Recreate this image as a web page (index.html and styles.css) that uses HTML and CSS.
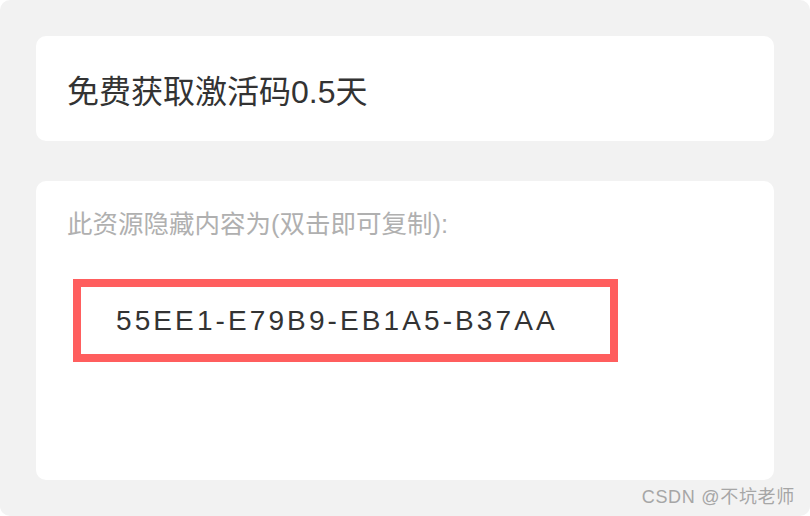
FILE: index.html
```html
<!DOCTYPE html>
<html lang="zh-CN">
<head>
    <meta charset="UTF-8">
    <meta name="viewport" content="width=device-width, initial-scale=1.0">
    <title>免费获取激活码</title>
    <link rel="stylesheet" href="styles.css">
</head>
<body>
    <div class="page">
        <div class="card card-title">
            <h1>免费获取激活码0.5天</h1>
        </div>

        <div class="card card-hidden">
            <p class="hint">此资源隐藏内容为(双击即可复制):</p>
            <div class="code-box">
                <span class="code">55EE1-E79B9-EB1A5-B37AA</span>
            </div>
        </div>

        <div class="watermark">CSDN @不坑老师</div>
    </div>
</body>
</html>
```

FILE: styles.css
```css
html, body {
    margin: 0;
    padding: 0;
    background: #fff;
}
body {
    font-family: "Liberation Sans", "Noto Sans CJK SC", sans-serif;
    color: #333;
}
.page {
    position: relative;
    box-sizing: border-box;
    width: 810px;
    height: 516px;
    padding: 36px;
    background: #f2f2f2;
    border-radius: 10px;
    display: flex;
    flex-direction: column;
    gap: 40px;
}
.card {
    background: #fff;
    border-radius: 10px;
    box-sizing: border-box;
}
.card-title {
    height: 105px;
    padding-left: 31px;
    display: flex;
    align-items: center;
}
.card-title h1 {
    margin: 0;
    font-size: 32px;
    font-weight: normal;
    color: #333;
}
.card-hidden {
    height: 299px;
    padding: 28px 0 0 31px;
}
.hint {
    margin: 0;
    font-size: 25.5px;
    line-height: 30px;
    color: #b0b0b0;
}
.code-box {
    box-sizing: border-box;
    width: 545px;
    height: 83px;
    margin: 40px 0 0 6px;
    border: 8px solid #ff5e5e;
    padding-left: 35px;
    display: flex;
    align-items: center;
}
.code {
    font-size: 28px;
    letter-spacing: 3.1px;
    color: #333;
}
.watermark {
    position: absolute;
    right: 15px;
    bottom: 8px;
    font-size: 18px;
    letter-spacing: 0.7px;
    color: #a6a6a6;
}
```
